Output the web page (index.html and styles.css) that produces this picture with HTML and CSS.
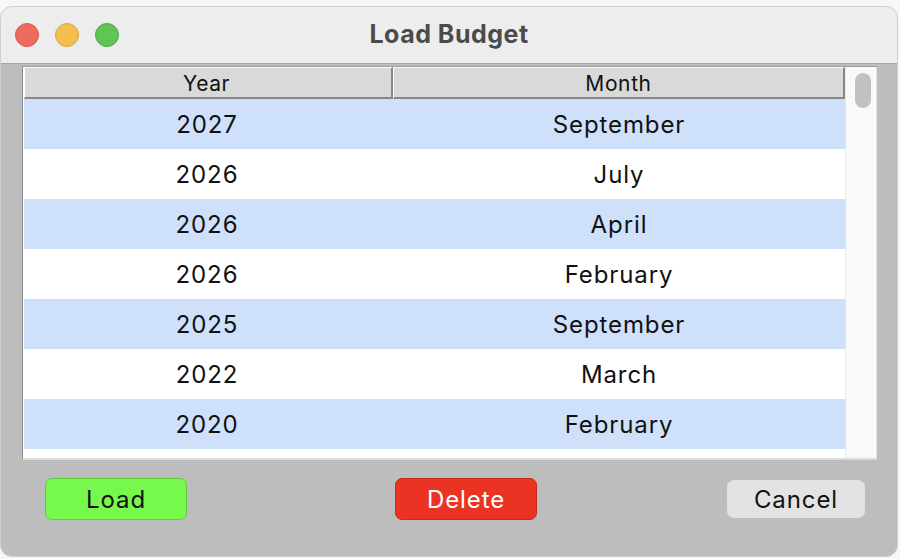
FILE: index.html
```html
<!DOCTYPE html>
<html>
<head>
<meta charset="utf-8">
<link rel="stylesheet" href="styles.css">
</head>
<body>
<div class="window">
  <div class="titlebar">
    <div class="lights">
      <span class="light red"></span>
      <span class="light yellow"></span>
      <span class="light green"></span>
    </div>
    <div class="title">Load Budget</div>
  </div>
  <div class="content">
    <div class="tableframe">
      <div class="table">
        <div class="thead">
          <div class="th year">Year</div>
          <div class="th month">Month</div>
        </div>
        <div class="row alt"><div class="td year">2027</div><div class="td month">September</div></div>
        <div class="row"><div class="td year">2026</div><div class="td month">July</div></div>
        <div class="row alt"><div class="td year">2026</div><div class="td month">April</div></div>
        <div class="row"><div class="td year">2026</div><div class="td month">February</div></div>
        <div class="row alt"><div class="td year">2025</div><div class="td month">September</div></div>
        <div class="row"><div class="td year">2022</div><div class="td month">March</div></div>
        <div class="row alt"><div class="td year">2020</div><div class="td month">February</div></div>
        <div class="row partial"></div>
      </div>
      <div class="scrollbar"><div class="thumb"></div></div>
    </div>
    <div class="buttons">
      <button class="btn load">Load</button>
      <button class="btn delete">Delete</button>
      <button class="btn cancel">Cancel</button>
    </div>
  </div>
</div>
</body>
</html>
```
FILE: styles.css
```css
* { box-sizing: border-box; }
html, body { margin: 0; padding: 0; background: #f7f7f7; }
body { font-family: Inter, "Liberation Sans", sans-serif; }

.window {
  margin-top: 6px;
  width: 898px;
  height: 551px;
  border: 1px solid #cfcfcf;
  border-radius: 12px;
  overflow: hidden;
  display: flex;
  flex-direction: column;
  background: #bdbdbd;
}

.titlebar {
  height: 57px;
  background: #ededed;
  border-bottom: 1px solid #a7a7a7;
  position: relative;
  display: flex;
  align-items: center;
  justify-content: center;
  flex-shrink: 0;
}
.lights {
  position: absolute;
  left: 14px;
  top: 16px;
  display: flex;
  gap: 16px;
}
.light {
  width: 24px;
  height: 24px;
  border-radius: 50%;
  display: block;
}
.red { background: #ee6a5f; border: 1px solid #d85b50; }
.yellow { background: #f5bf4f; border: 1px solid #d9a540; }
.green { background: #61c554; border: 1px solid #50a844; }
.title {
  font-size: 25px;
  font-weight: 700;
  color: #4b4b4b;
  margin-top: -3px;
  letter-spacing: 0.5px;
}

.content {
  flex: 1;
  display: flex;
  flex-direction: column;
  padding: 2px 20px 0 21px;
}

.tableframe {
  height: 394px;
  display: flex;
  border-top: 1px solid #9c9c9c;
  border-left: 1px solid #8e8e8e;
  border-bottom: 2px solid #dcdcdc;
  background: #fff;
}
.table {
  flex: 1;
  display: flex;
  flex-direction: column;
  overflow: hidden;
  background: #fff;
  border-left: 1px solid #ffffff;
}
.thead {
  display: flex;
  height: 32px;
  flex-shrink: 0;
}
.th {
  background: #d9d9d9;
  border-top: 1px solid #fff;
  border-left: 1px solid #fff;
  border-right: 2px solid #888;
  border-bottom: 2px solid #888;
  font-size: 21px;
  letter-spacing: 0.6px;
  color: #111;
  display: flex;
  align-items: center;
  justify-content: center;
  padding-top: 1px;
}
.th.year { width: 369px; padding-right: 3px; }
.th.month { flex: 1; }

.row {
  display: flex;
  height: 50px;
  flex-shrink: 0;
  background: #fff;
}
.row.alt { background: #cfe0fa; }
.row.partial { height: 12px; }
.td {
  font-size: 24px;
  letter-spacing: 0.9px;
  color: #111;
  display: flex;
  align-items: center;
  justify-content: center;
}
.td.year { width: 369px; padding-right: 3px; }
.td.month { flex: 1; }

.scrollbar {
  width: 32px;
  background: #f9f9f9;
  border-left: 1px solid #e9e9e9;
  border-right: 1px solid #e3e3e3;
  padding: 6px 0 0 9px;
}
.thumb {
  width: 16px;
  height: 35px;
  border-radius: 8px;
  background: #c2c2c2;
}

.buttons {
  display: flex;
  align-items: center;
  padding-top: 18px;
  padding-left: 23px;
}
.btn {
  font-family: Inter, "Liberation Sans", sans-serif;
  font-size: 24px;
  letter-spacing: 0.9px;
  height: 42px;
  width: 142px;
  border-radius: 7px;
  padding: 0;
  color: #111;
  display: flex;
  align-items: center;
  justify-content: center;
}
.btn.load { background: #77f84c; border: 1.5px solid #5ecf3b; }
.btn.delete { background: #ea3323; border: 1.5px solid #c52a1f; color: #fff; margin-left: 208px; }
.btn.cancel { background: #e3e3e3; border: none; height: 38px; width: 138px; margin-left: 190px; }
```
